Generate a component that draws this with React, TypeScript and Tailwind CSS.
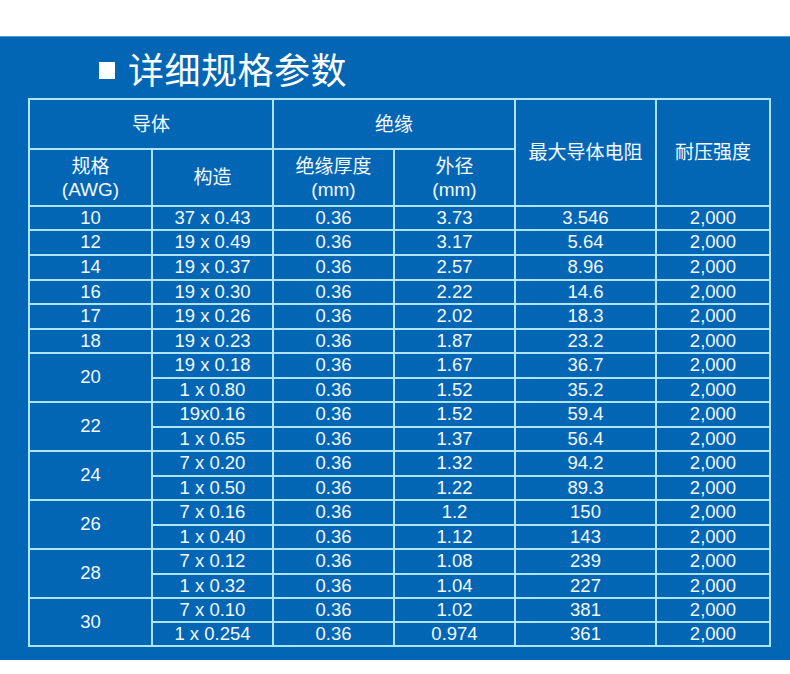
import React from "react";

type Row = { awg?: string; span?: boolean; c: string; t: string; od: string; r: string };

const rows: Row[] = [
  { awg: "10", c: "37 x 0.43", t: "0.36", od: "3.73", r: "3.546" },
  { awg: "12", c: "19 x 0.49", t: "0.36", od: "3.17", r: "5.64" },
  { awg: "14", c: "19 x 0.37", t: "0.36", od: "2.57", r: "8.96" },
  { awg: "16", c: "19 x 0.30", t: "0.36", od: "2.22", r: "14.6" },
  { awg: "17", c: "19 x 0.26", t: "0.36", od: "2.02", r: "18.3" },
  { awg: "18", c: "19 x 0.23", t: "0.36", od: "1.87", r: "23.2" },
  { awg: "20", span: true, c: "19 x 0.18", t: "0.36", od: "1.67", r: "36.7" },
  { c: "1 x 0.80", t: "0.36", od: "1.52", r: "35.2" },
  { awg: "22", span: true, c: "19x0.16", t: "0.36", od: "1.52", r: "59.4" },
  { c: "1 x 0.65", t: "0.36", od: "1.37", r: "56.4" },
  { awg: "24", span: true, c: "7 x 0.20", t: "0.36", od: "1.32", r: "94.2" },
  { c: "1 x 0.50", t: "0.36", od: "1.22", r: "89.3" },
  { awg: "26", span: true, c: "7 x 0.16", t: "0.36", od: "1.2", r: "150" },
  { c: "1 x 0.40", t: "0.36", od: "1.12", r: "143" },
  { awg: "28", span: true, c: "7 x 0.12", t: "0.36", od: "1.08", r: "239" },
  { c: "1 x 0.32", t: "0.36", od: "1.04", r: "227" },
  { awg: "30", span: true, c: "7 x 0.10", t: "0.36", od: "1.02", r: "381" },
  { c: "1 x 0.254", t: "0.36", od: "0.974", r: "361" },
];

const cell = "flex items-center justify-center bg-[#0366b4] text-[#f4f9ff] text-center";
const num = "text-[18.5px] leading-none";
const head = "text-[19px] leading-[23px]";

export default function App() {
  return (
    <div className="w-[790px] h-[674px] bg-white font-['Liberation_Sans','Noto_Sans_CJK_SC',sans-serif]">
      <div className="h-[36px]" />
      <div className="h-[624px] bg-[#0366b4] border-t border-[#4f9bd8] pl-[28px] flex flex-col">
        <div className="h-[61px] flex items-center pl-[71px] pt-[1px]">
          <div className="w-[16px] h-[17px] bg-white mt-[4px]" />
          <span className="ml-[13px] text-[36px] leading-none text-white font-['Noto_Sans_CJK_SC',sans-serif] tracking-[0.5px]">
            详细规格参数
          </span>
        </div>
        <div className="w-[743px] bg-[#aee4f8] p-[2px] grid gap-[2px] grid-cols-[121px_119px_119px_119px_139px_112px] grid-rows-[48px_55px_22px_23px_23px_22px_23px_22px_23px_22px_23px_22px_23px_22px_23px_22px_23px_22px_22px_22px]">
          <div className={`${cell} ${head} col-span-2`}>导体</div>
          <div className={`${cell} ${head} col-span-2`}>绝缘</div>
          <div className={`${cell} ${head} row-span-2`}>最大导体电阻</div>
          <div className={`${cell} ${head} row-span-2`}>耐压强度</div>
          <div className={`${cell} ${head} flex-col`}>
            <span>规格</span>
            <span>(AWG)</span>
          </div>
          <div className={`${cell} ${head}`}>构造</div>
          <div className={`${cell} ${head} flex-col`}>
            <span>绝缘厚度</span>
            <span>(mm)</span>
          </div>
          <div className={`${cell} ${head} flex-col`}>
            <span>外径</span>
            <span>(mm)</span>
          </div>
          {rows.map((r, i) => (
            <React.Fragment key={i}>
              {r.awg !== undefined && (
                <div className={`${cell} ${num} ${r.span ? "row-span-2" : ""}`}>{r.awg}</div>
              )}
              <div className={`${cell} ${num}`}>{r.c}</div>
              <div className={`${cell} ${num}`}>{r.t}</div>
              <div className={`${cell} ${num}`}>{r.od}</div>
              <div className={`${cell} ${num}`}>{r.r}</div>
              <div className={`${cell} ${num}`}>2,000</div>
            </React.Fragment>
          ))}
        </div>
      </div>
    </div>
  );
}
